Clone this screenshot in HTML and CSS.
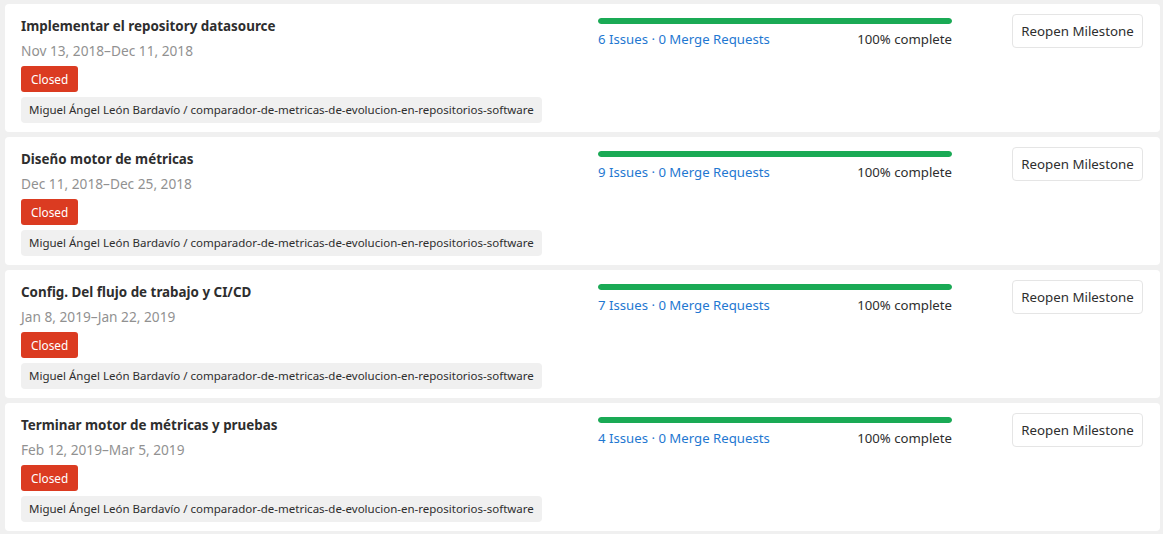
FILE: index.html
```html
<!DOCTYPE html>
<html lang="es">
<head>
<meta charset="utf-8">
<title>Milestones</title>
<link rel="stylesheet" href="styles.css">
</head>
<body>
<ul class="milestones">
  <li class="milestone">
    <div class="info">
      <div class="title">Implementar el repository datasource</div>
      <div class="dates">Nov 13, 2018–Dec 11, 2018</div>
      <div><span class="badge">Closed</span></div>
      <div><span class="project">Miguel Ángel León Bardavío / comparador-de-metricas-de-evolucion-en-repositorios-software</span></div>
    </div>
    <div class="progress-col">
      <div class="bar"><div class="bar-fill" style="width:100%"></div></div>
      <div class="stats">
        <span class="links"><a href="#">6 Issues</a> · <a href="#">0 Merge Requests</a></span>
        <span class="pct">100% complete</span>
      </div>
    </div>
    <div class="actions"><button class="btn">Reopen Milestone</button></div>
  </li>
  <li class="milestone">
    <div class="info">
      <div class="title">Diseño motor de métricas</div>
      <div class="dates">Dec 11, 2018–Dec 25, 2018</div>
      <div><span class="badge">Closed</span></div>
      <div><span class="project">Miguel Ángel León Bardavío / comparador-de-metricas-de-evolucion-en-repositorios-software</span></div>
    </div>
    <div class="progress-col">
      <div class="bar"><div class="bar-fill" style="width:100%"></div></div>
      <div class="stats">
        <span class="links"><a href="#">9 Issues</a> · <a href="#">0 Merge Requests</a></span>
        <span class="pct">100% complete</span>
      </div>
    </div>
    <div class="actions"><button class="btn">Reopen Milestone</button></div>
  </li>
  <li class="milestone">
    <div class="info">
      <div class="title">Config. Del flujo de trabajo y CI/CD</div>
      <div class="dates">Jan 8, 2019–Jan 22, 2019</div>
      <div><span class="badge">Closed</span></div>
      <div><span class="project">Miguel Ángel León Bardavío / comparador-de-metricas-de-evolucion-en-repositorios-software</span></div>
    </div>
    <div class="progress-col">
      <div class="bar"><div class="bar-fill" style="width:100%"></div></div>
      <div class="stats">
        <span class="links"><a href="#">7 Issues</a> · <a href="#">0 Merge Requests</a></span>
        <span class="pct">100% complete</span>
      </div>
    </div>
    <div class="actions"><button class="btn">Reopen Milestone</button></div>
  </li>
  <li class="milestone">
    <div class="info">
      <div class="title">Terminar motor de métricas y pruebas</div>
      <div class="dates">Feb 12, 2019–Mar 5, 2019</div>
      <div><span class="badge">Closed</span></div>
      <div><span class="project">Miguel Ángel León Bardavío / comparador-de-metricas-de-evolucion-en-repositorios-software</span></div>
    </div>
    <div class="progress-col">
      <div class="bar"><div class="bar-fill" style="width:100%"></div></div>
      <div class="stats">
        <span class="links"><a href="#">4 Issues</a> · <a href="#">0 Merge Requests</a></span>
        <span class="pct">100% complete</span>
      </div>
    </div>
    <div class="actions"><button class="btn">Reopen Milestone</button></div>
  </li>
</ul>
</body>
</html>
```
FILE: styles.css
```css
html, body {
  margin: 0;
  padding: 0;
  background: #f0f0f0;
}
body {
  font-family: "Noto Sans", "Open Sans", sans-serif;
  color: #2e2e2e;
  font-size: 13.3px;
  padding: 4px 3px 0 5px;
}
.milestones {
  list-style: none;
  margin: 0;
  padding: 0;
  display: flex;
  flex-direction: column;
  gap: 5px;
}
.milestone {
  background: #fff;
  border-radius: 4px;
  height: 128px;
  box-sizing: border-box;
  padding: 10px 17px 0 16px;
  display: grid;
  grid-template-columns: 577px 354px 1fr;
  align-items: start;
}
.info {
  display: flex;
  flex-direction: column;
  gap: 5px;
  padding-top: 2px;
}
.title {
  font-weight: 700;
  font-size: 13.4px;
  line-height: 20px;
  color: #2e2e2e;
}
.dates {
  color: #919191;
  font-size: 13.7px;
  line-height: 20px;
}
.badge {
  display: inline-block;
  background: #db3b21;
  color: #fff;
  font-size: 11.8px;
  line-height: 26px;
  height: 26px;
  padding: 0 10px;
  border-radius: 3px;
}
.project {
  display: inline-block;
  background: #f0f0f0;
  color: #2e2e2e;
  font-size: 11.5px;
  line-height: 26px;
  height: 26px;
  padding: 0 8px;
  border-radius: 4px;
}
.progress-col {
  padding-top: 4px;
}
.bar {
  height: 6px;
  background: #eee;
  border-radius: 3px;
  overflow: hidden;
}
.bar-fill {
  height: 100%;
  background: #1aaa55;
  border-radius: 3px;
}
.stats {
  display: flex;
  justify-content: space-between;
  margin-top: 5px;
  line-height: 20px;
  font-size: 13.2px;
}
.links {
  color: #1f78d1;
}
.links a {
  color: #1f78d1;
  text-decoration: none;
}
.pct {
  color: #2e2e2e;
}
.actions {
  display: flex;
  justify-content: flex-end;
}
.btn {
  font-family: inherit;
  font-size: 13.3px;
  color: #2e2e2e;
  background: #fff;
  border: 1px solid #e5e5e5;
  border-radius: 4px;
  height: 34px;
  width: 131px;
  padding: 0;
  cursor: pointer;
}
```
